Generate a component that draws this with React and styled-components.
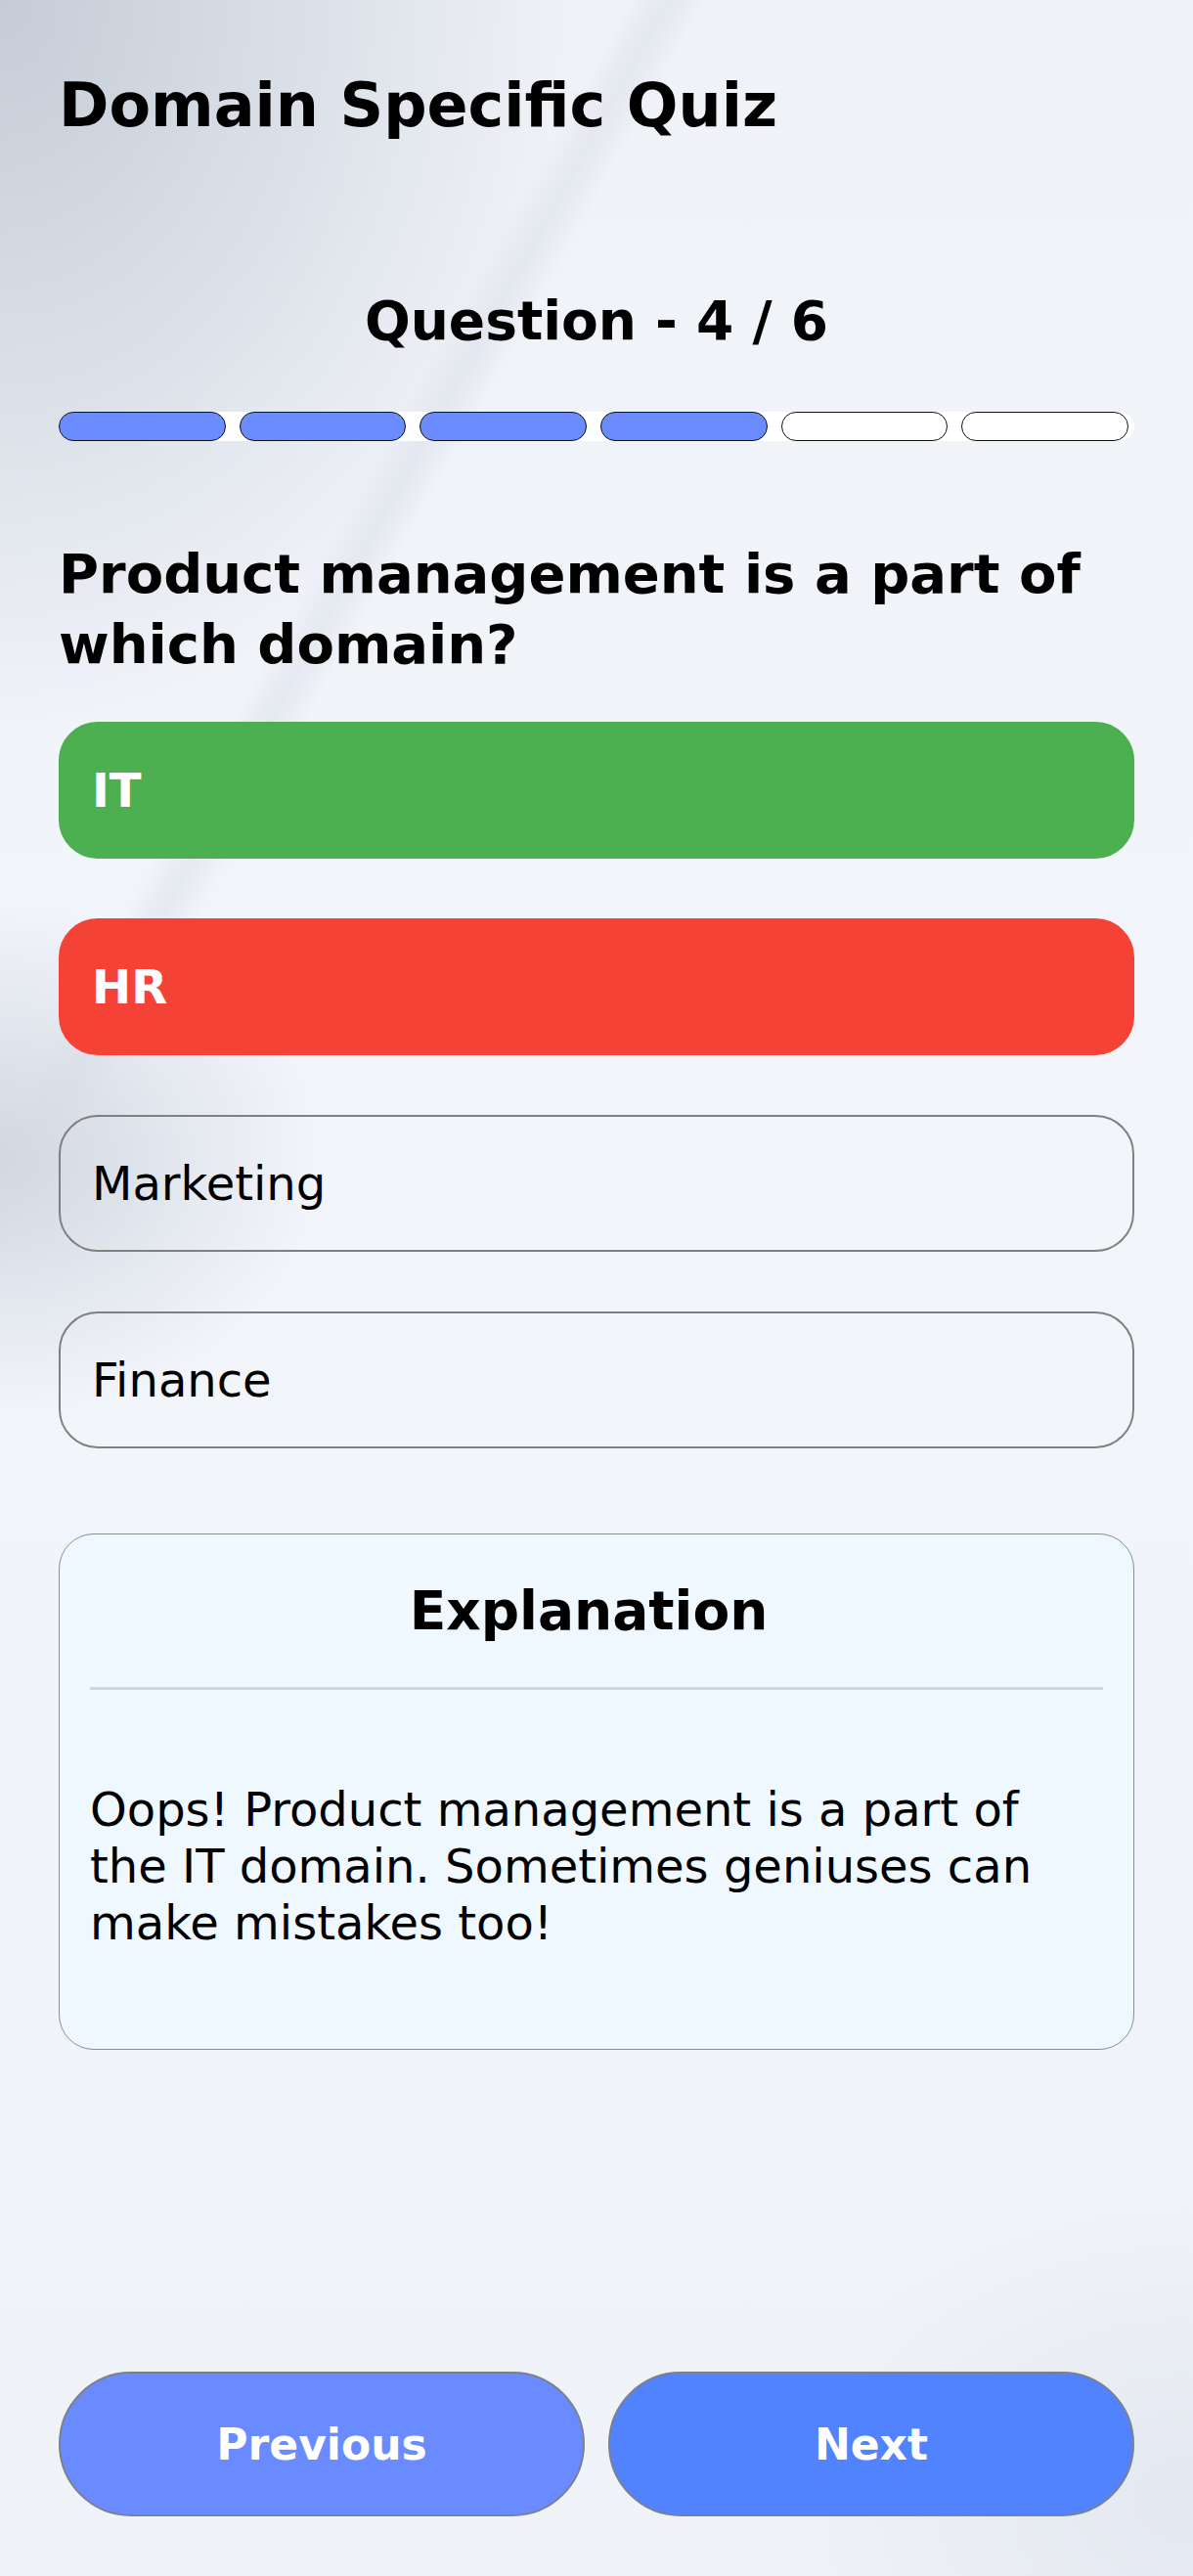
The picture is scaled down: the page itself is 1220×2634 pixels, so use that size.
import React from "react";
import styled, { createGlobalStyle } from "styled-components";

const GlobalStyle = createGlobalStyle`
  html, body {
    margin: 0;
    padding: 0;
  }
  body {
    font-family: "DejaVu Sans", "Liberation Sans", sans-serif;
    background: #eef2f7;
    color: #000;
  }
  * { box-sizing: border-box; }
`;

const Page = styled.div`
  min-height: 100vh;
  display: flex;
  flex-direction: column;
  padding: 71px 60px 61px;
  background-color: #eff2f7;
  background-image:
    linear-gradient(119deg, transparent 24%, rgba(214,219,229,0.45) 25.5%, transparent 27%),
    radial-gradient(ellipse 820px 1050px at 0% 0%, rgba(197,204,215,1) 0%, rgba(212,218,227,0.75) 38%, rgba(239,242,247,0) 72%),
    radial-gradient(ellipse 330px 260px at 0% 45%, rgba(203,209,220,0.85), rgba(239,242,247,0) 100%),
    radial-gradient(ellipse 420px 300px at 100% 97%, rgba(226,230,239,0.9), rgba(239,242,247,0) 100%),
    linear-gradient(180deg, #eff2f7 0%, #f2f5fa 45%, #eff2f7 100%);
`;

const Title = styled.h1`
  margin: 0;
  font-size: 62px;
  line-height: 1.2;
  font-weight: 700;
`;

const Counter = styled.h2`
  margin: 150px 0 0;
  text-align: center;
  font-size: 55px;
  line-height: 1.2;
  font-weight: 700;
`;

const Progress = styled.div`
  margin-top: 60px;
  display: flex;
  gap: 14px;
  height: 30px;
  background: #ffffff;
  border-radius: 15px;
  padding-right: 6px;
`;

const Segment = styled.div`
  flex: 1;
  height: 100%;
  border: 1.5px solid #111;
  border-radius: 15px;
  background: ${(p) => (p.$done ? "#6b8cff" : "#ffffff")};
`;

const Question = styled.h3`
  margin: 100px 0 0;
  font-size: 56px;
  line-height: 72px;
  font-weight: 700;
`;

const OptionList = styled.div`
  margin-top: 43px;
  display: flex;
  flex-direction: column;
  gap: 61px;
`;

const optionColors = {
  correct: { bg: "#4caf50", border: "#4caf50", color: "#fff", weight: 700 },
  wrong: { bg: "#f44336", border: "#f44336", color: "#fff", weight: 700 },
  idle: { bg: "transparent", border: "#808080", color: "#000", weight: 400 },
};

const Option = styled.div`
  height: 140px;
  display: flex;
  align-items: center;
  padding: 0 32px;
  border-radius: 40px;
  border: 2px solid ${(p) => optionColors[p.$state].border};
  background: ${(p) => optionColors[p.$state].bg};
  color: ${(p) => optionColors[p.$state].color};
  font-weight: ${(p) => optionColors[p.$state].weight};
  font-size: 48px;
`;

const ExplanationCard = styled.section`
  margin-top: 87px;
  min-height: 527px;
  background: #f0f8ff;
  border: 1px solid #8a8d93;
  border-radius: 36px;
  padding: 45px 31px 100px;
`;

const ExplanationTitle = styled.h4`
  margin: 0;
  padding-right: 16px;
  text-align: center;
  font-size: 55px;
  line-height: 1.2;
  font-weight: 700;
`;

const Divider = styled.hr`
  margin: 45px 0 0;
  border: none;
  height: 3px;
  background: #d1d5db;
`;

const ExplanationText = styled.p`
  margin: 93px 0 0;
  font-size: 48px;
  line-height: 58px;
  font-weight: 400;
  max-width: 1010px;
`;

const ButtonRow = styled.div`
  margin-top: auto;
  display: grid;
  grid-template-columns: 1fr 1fr;
  gap: 24px;
`;

const NavButton = styled.button`
  height: 148px;
  border-radius: 74px;
  border: 2px solid #7b808e;
  background: ${(p) => (p.$primary ? "#5283ff" : "#6a8bff")};
  color: #fff;
  font-family: inherit;
  font-size: 44px;
  font-weight: 700;
  cursor: pointer;
`;

const options = [
  { label: "IT", state: "correct" },
  { label: "HR", state: "wrong" },
  { label: "Marketing", state: "idle" },
  { label: "Finance", state: "idle" },
];

export default function App() {
  const total = 6;
  const current = 4;
  return (
    <>
      <GlobalStyle />
      <Page>
        <Title>Domain Specific Quiz</Title>
        <Counter>Question - {current} / {total}</Counter>
        <Progress>
          {Array.from({ length: total }).map((_, i) => (
            <Segment key={i} $done={i < current} />
          ))}
        </Progress>
        <Question>Product management is a part of which domain?</Question>
        <OptionList>
          {options.map((o) => (
            <Option key={o.label} $state={o.state}>
              {o.label}
            </Option>
          ))}
        </OptionList>
        <ExplanationCard>
          <ExplanationTitle>Explanation</ExplanationTitle>
          <Divider />
          <ExplanationText>
            Oops! Product management is a part of the IT domain. Sometimes geniuses can make mistakes too!
          </ExplanationText>
        </ExplanationCard>
        <ButtonRow>
          <NavButton>Previous</NavButton>
          <NavButton $primary>Next</NavButton>
        </ButtonRow>
      </Page>
    </>
  );
}
